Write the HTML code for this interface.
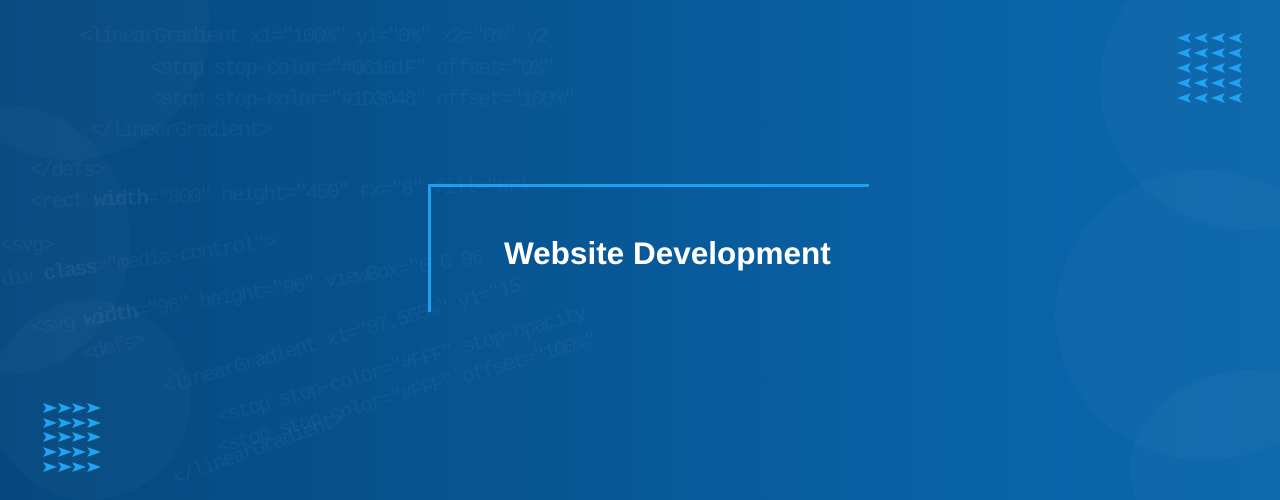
<!DOCTYPE html>
<html><head><style>
html,body{margin:0;padding:0;width:1280px;height:500px;overflow:hidden}
body{position:relative;background:linear-gradient(90deg,#05487f 0%,#075592 40%,#0a62a6 75%,#0b66ab 100%);font-family:"Liberation Sans",sans-serif}
.wrap{position:absolute;left:0;top:0;width:1280px;height:500px;overflow:hidden}
.c{position:absolute;border-radius:50%;background:rgba(255,255,255,0.022)}
.code{position:absolute;font-family:"Liberation Mono",monospace;color:rgba(150,190,230,0.07);white-space:nowrap;font-size:21px;letter-spacing:-2px;transform-origin:0 0}
.code b{color:rgba(150,190,230,0.10)}
.h{position:absolute;left:429px;top:184px;width:440px;height:3px;background:#1d9fef}
.v{position:absolute;left:428px;top:184px;width:3px;height:128px;background:#1d9fef}
.t{position:absolute;left:504px;top:235px;color:#fff;font-size:31.5px;font-weight:bold;letter-spacing:0px}
</style></head><body>
<div class="wrap">
<div class="c" style="left:-70px;top:-110px;width:280px;height:270px"></div>
<div class="c" style="left:-120px;top:105px;width:250px;height:270px"></div>
<div class="c" style="left:-10px;top:300px;width:200px;height:200px"></div>
<div class="c" style="left:1100px;top:-60px;width:300px;height:290px"></div>
<div class="c" style="left:1055px;top:170px;width:300px;height:290px"></div>
<div class="c" style="left:1130px;top:370px;width:250px;height:200px"></div>
<div class="code" style="left:80px;top:26px">&lt;linearGradient x1="100%" y1="0%" x2="0%" y2</div>
<div class="code" style="left:150px;top:58px">&lt;stop stop-color="#06101F" offset="0%"</div>
<div class="code" style="left:150px;top:89px">&lt;stop stop-color="#1D3048" offset="100%"</div>
<div class="code" style="left:90px;top:120px">&lt;/linearGradient&gt;</div>
<div class="code" style="left:30px;top:160px">&lt;/defs&gt;</div>
<div class="code" style="left:30px;top:192px;transform:rotate(-2deg)">&lt;rect <b>width</b>="800" height="450" rx="8" fill="url</div>
<div class="code" style="left:0px;top:235px">&lt;svg&gt;</div>
<div class="code" style="left:0px;top:270px;transform:rotate(-8deg)">div <b>class</b>="media-control"&gt;</div>
<div class="code" style="left:30px;top:318px;transform:rotate(-9deg)">&lt;svg <b>width</b>="96" height="96" viewBox="0 0 96</div>
<div class="code" style="left:80px;top:345px;transform:rotate(-14deg)">&lt;defs&gt;</div>
<div class="code" style="left:160px;top:378px;transform:rotate(-16deg)">&lt;linearGradient x1="87.565%" y1="15.</div>
<div class="code" style="left:215px;top:408px;transform:rotate(-16deg)">&lt;stop stop-color="#FFF" stop-opacity</div>
<div class="code" style="left:215px;top:438px;transform:rotate(-16deg)">&lt;stop stop-color="#FFF" offset="100%"</div>
<div class="code" style="left:170px;top:470px;transform:rotate(-20deg)">&lt;/linearGradient&gt;</div>
</div>
<div class="h"></div><div class="v"></div>
<div class="t">Website Development</div>
<svg style="position:absolute;left:0;top:0" width="1280" height="500">
<defs>
<polygon id="r" points="0,0 14,5 0,10 3,5" fill="#1fa3f2"/>
<polygon id="l" points="14,0 0,5 14,10 11,5" fill="#1fa3f2"/>
</defs>
<g>
<use href="#r" x="43" y="403"/><use href="#r" x="58" y="403"/><use href="#r" x="72" y="403"/><use href="#r" x="87" y="403"/>
<use href="#r" x="43" y="418"/><use href="#r" x="58" y="418"/><use href="#r" x="72" y="418"/><use href="#r" x="87" y="418"/>
<use href="#r" x="43" y="432"/><use href="#r" x="58" y="432"/><use href="#r" x="72" y="432"/><use href="#r" x="87" y="432"/>
<use href="#r" x="43" y="447"/><use href="#r" x="58" y="447"/><use href="#r" x="72" y="447"/><use href="#r" x="87" y="447"/>
<use href="#r" x="43" y="462"/><use href="#r" x="58" y="462"/><use href="#r" x="72" y="462"/><use href="#r" x="87" y="462"/>
</g>
<g>
<use href="#l" x="1177" y="33"/><use href="#l" x="1194" y="33"/><use href="#l" x="1211" y="33"/><use href="#l" x="1228" y="33"/>
<use href="#l" x="1177" y="48"/><use href="#l" x="1194" y="48"/><use href="#l" x="1211" y="48"/><use href="#l" x="1228" y="48"/>
<use href="#l" x="1177" y="63"/><use href="#l" x="1194" y="63"/><use href="#l" x="1211" y="63"/><use href="#l" x="1228" y="63"/>
<use href="#l" x="1177" y="78"/><use href="#l" x="1194" y="78"/><use href="#l" x="1211" y="78"/><use href="#l" x="1228" y="78"/>
<use href="#l" x="1177" y="93"/><use href="#l" x="1194" y="93"/><use href="#l" x="1211" y="93"/><use href="#l" x="1228" y="93"/>
</g>
</svg>
</body></html>
